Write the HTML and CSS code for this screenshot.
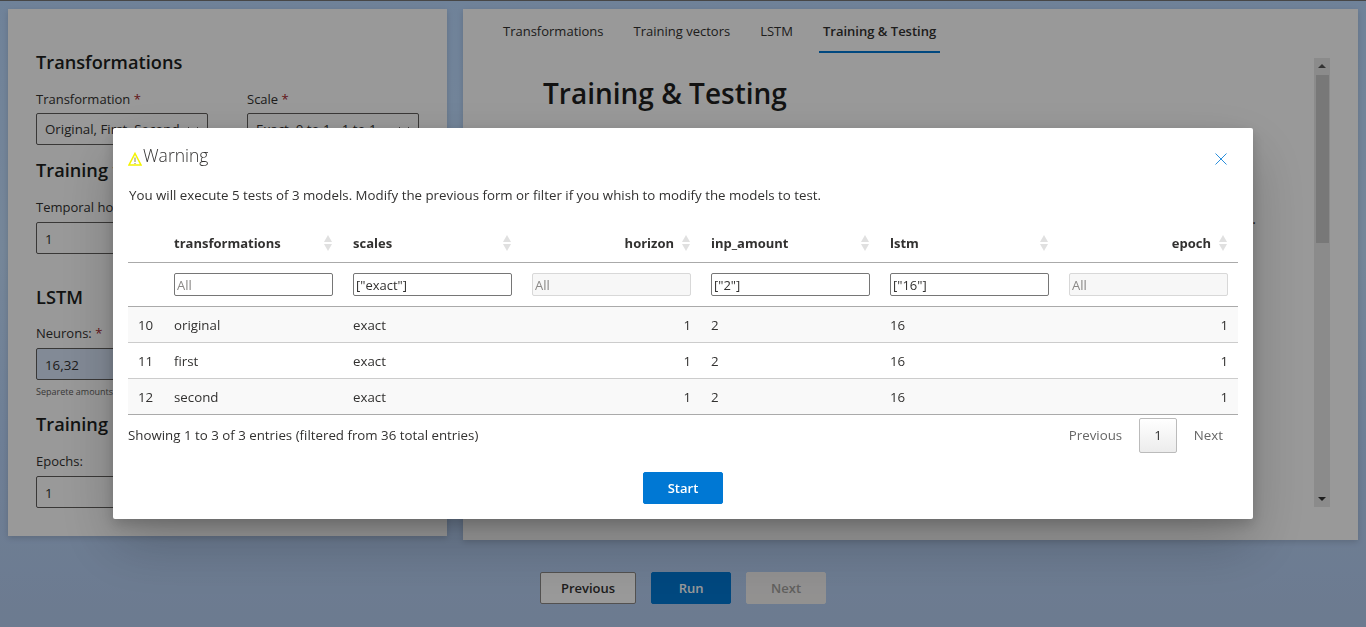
FILE: index.html
```html
<!DOCTYPE html>
<html lang="en">

<head>
    <title>Training &amp; Testing</title>
    <link rel="stylesheet" href="styles.css">
</head>

<body>
    <div class="app">
        <div class="columns">
            <section class="panel form-panel">
                <h2>Transformations</h2>
                <div class="field-row">
                    <div class="field">
                        <label>Transformation <span class="req">*</span></label>
                        <div class="select"><span>Original, First, Second</span><svg width="12" height="12" viewBox="0 0 12 12"><path d="M1 4l5 5 5-5" fill="none" stroke="#605e5c"/></svg></div>
                    </div>
                    <div class="field">
                        <label>Scale <span class="req">*</span></label>
                        <div class="select"><span>Exact, 0 to 1, -1 to 1</span><svg width="12" height="12" viewBox="0 0 12 12"><path d="M1 4l5 5 5-5" fill="none" stroke="#605e5c"/></svg></div>
                    </div>
                </div>
                <h2 class="group-title">Training vectors</h2>
                <label>Temporal horizon:</label>
                <div class="text-input">1</div>
                <h2 class="lstm-title">LSTM</h2>
                <label>Neurons: <span class="req">*</span></label>
                <div class="text-input filled">16,32</div>
                <p class="hint">Separete amounts with commas</p>
                <h2 class="group-title tight">Training</h2>
                <label>Epochs:</label>
                <div class="text-input">1</div>
            </section>

            <section class="panel main-panel">
                <nav class="tabs">
                    <a>Transformations</a>
                    <a>Training vectors</a>
                    <a>LSTM</a>
                    <a class="active">Training &amp; Testing</a>
                </nav>
                <div class="scroll-area">
                    <div class="content">
                        <h1>Training &amp; Testing</h1>
                        <p class="stray">.</p>
                    </div>
                    <div class="scrollbar">
                        <span class="arrow up"></span>
                        <span class="thumb"></span>
                        <span class="arrow down"></span>
                    </div>
                </div>
            </section>
        </div>

        <div class="wizard-buttons">
            <button class="btn">Previous</button>
            <button class="btn primary">Run</button>
            <button class="btn disabled">Next</button>
        </div>
    </div>

    <div class="overlay">
        <div class="modal">
            <div class="modal-head">
                <svg class="warn" width="14" height="14" viewBox="0 0 14 14"><path d="M7 1.5L13 13H1z" fill="none" stroke="#f4f400" stroke-width="1.6"/><path d="M7 5.5v4.5M7 11v1" stroke="#8a8a4a" stroke-width="1"/></svg>
                <span class="modal-title">Warning</span>
                <svg class="close" width="12" height="12" viewBox="0 0 12 12"><path d="M0.5 0.5l11 11M11.5 0.5l-11 11" stroke="#2b8fdc" stroke-width="1" fill="none"/></svg>
            </div>
            <p class="modal-text">You will execute 5 tests of 3 models. Modify the previous form or filter if you whish to modify the models to test.</p>

            <table class="grid">
                <colgroup>
                    <col class="idx-col">
                    <col><col><col><col><col><col>
                </colgroup>
                <thead>
                    <tr class="titles">
                        <th></th>
                        <th><span>transformations</span><i class="sort"></i></th>
                        <th><span>scales</span><i class="sort"></i></th>
                        <th class="num"><span>horizon</span><i class="sort"></i></th>
                        <th><span>inp_amount</span><i class="sort"></i></th>
                        <th><span>lstm</span><i class="sort"></i></th>
                        <th class="num"><span>epoch</span><i class="sort"></i></th>
                    </tr>
                    <tr class="filters">
                        <td></td>
                        <td><input type="text" placeholder="All"></td>
                        <td><input type="text" value="[&quot;exact&quot;]"></td>
                        <td><input type="text" placeholder="All" disabled></td>
                        <td><input type="text" value="[&quot;2&quot;]"></td>
                        <td><input type="text" value="[&quot;16&quot;]"></td>
                        <td><input type="text" placeholder="All" disabled></td>
                    </tr>
                </thead>
                <tbody>
                    <tr>
                        <td class="idx">10</td><td>original</td><td>exact</td><td class="right">1</td><td>2</td><td>16</td><td class="right">1</td>
                    </tr>
                    <tr>
                        <td class="idx">11</td><td>first</td><td>exact</td><td class="right">1</td><td>2</td><td>16</td><td class="right">1</td>
                    </tr>
                    <tr>
                        <td class="idx">12</td><td>second</td><td>exact</td><td class="right">1</td><td>2</td><td>16</td><td class="right">1</td>
                    </tr>
                </tbody>
            </table>

            <div class="table-foot">
                <span>Showing 1 to 3 of 3 entries (filtered from 36 total entries)</span>
                <div class="pager">
                    <a>Previous</a>
                    <a class="current">1</a>
                    <a>Next</a>
                </div>
            </div>

            <div class="modal-actions">
                <button class="btn primary">Start</button>
            </div>
        </div>
    </div>
</body>

</html>
```

FILE: styles.css
```css
/* Page */
body {
    font-family: 'Open Sans', 'Noto Sans', sans-serif;
    font-size: 14px;
    color: #323130;
    margin: 0;
    height: 627px;
    overflow: hidden;
    background: linear-gradient(180deg, #bad9ff 0%, #c4e0ff 40%, #b8d4fa 70%, #b5cdf0 100%);
    border-top: 1px solid #777;
    box-sizing: border-box;
}

.app {
    padding: 8px 8px 0;
}

.columns {
    display: flex;
    align-items: flex-start;
    gap: 16px;
}

.panel {
    background-color: #fff;
    box-shadow: 0 2px 6px rgba(0, 0, 0, 0.15);
    box-sizing: border-box;
}

/* Left form */
.form-panel {
    width: 439px;
    height: 527px;
    padding: 39px 28px 0;
    overflow: hidden;
}

h2 {
    font-size: 18.2px;
    font-weight: 600;
    line-height: 28px;
    margin: 0;
    color: #201f1e;
}

.field-row {
    display: flex;
    gap: 39px;
    margin-top: 13px;
}

.field {
    width: 172px;
}

label {
    display: block;
    font-weight: 400;
    font-size: 13px;
    line-height: 20px;
    margin-bottom: 4px;
}

.req {
    color: #a4262c;
}

.select,
.text-input {
    box-sizing: border-box;
    height: 32px;
    border: 1px solid #605e5c;
    border-radius: 2px;
    padding: 0 8px;
    line-height: 30px;
    font-size: 13.3px;
    white-space: nowrap;
    overflow: hidden;
}

.select {
    display: flex;
    justify-content: space-between;
    align-items: center;
}

.text-input {
    width: 330px;
    margin-top: 5px;
    line-height: 32px;
}

.text-input.filled {
    background-color: #d9e6fa;
}

.group-title {
    margin-top: 11px;
    margin-bottom: 13px;
}

.group-title.tight {
    margin-top: 12px;
    margin-bottom: 13px;
}

.lstm-title {
    margin-top: 29px;
    margin-bottom: 12px;
}

.hint {
    font-size: 9px;
    line-height: 12px;
    margin: 6px 0 0;
    color: #605e5c;
}

/* Right side */
.main-panel {
    width: 895px;
    height: 531px;
    padding-left: 24px;
}

.tabs {
    display: flex;
    gap: 22px;
    padding-left: 12px;
}

.tabs a {
    font-size: 13px;
    line-height: 44px;
    height: 44px;
    padding: 0 4px;
    box-sizing: border-box;
    color: #323130;
}

.tabs a.active {
    font-weight: 600;
    border-bottom: 2px solid #0078d4;
}

.scroll-area {
    display: flex;
    justify-content: space-between;
    padding-top: 5px;
    padding-right: 28px;
}

.content {
    padding-left: 56px;
    width: 713px;
}

h1 {
    font-size: 28px;
    font-weight: 600;
    line-height: 40px;
    margin: 15px 0 0;
    color: #201f1e;
}

.stray {
    margin: 96px 0 0;
    text-align: right;
    line-height: 20px;
}

.scrollbar {
    width: 16px;
    height: 449px;
    background-color: #e8e8e8;
    display: flex;
    flex-direction: column;
    align-items: center;
}

.arrow {
    flex: none;
    width: 0;
    height: 0;
    border-left: 4px solid transparent;
    border-right: 4px solid transparent;
}

.arrow.up {
    border-bottom: 4px solid #555;
    margin: 6px 0 7px;
}

.arrow.down {
    border-top: 4px solid #333;
    margin: auto 0 6px;
}

.thumb {
    width: 13px;
    height: 168px;
    background-color: #c8c8c8;
}

/* Previous / Run / Next */
.wizard-buttons {
    display: flex;
    justify-content: center;
    gap: 15px;
    margin-top: 32px;
}

.btn {
    font-family: inherit;
    font-size: 13px;
    font-weight: 600;
    height: 32px;
    min-width: 80px;
    padding: 0 20px;
    background-color: #fff;
    color: #323130;
    border: 1px solid #8a8886;
    border-radius: 2px;
}

.btn.primary {
    background-color: #0078d4;
    border-color: #0078d4;
    color: #fff;
}

.btn.disabled {
    background-color: #f3f2f1;
    border-color: #f3f2f1;
    color: #a19f9d;
}

/* Dialog */
.overlay {
    position: fixed;
    top: 0;
    left: 0;
    right: 0;
    bottom: 0;
    background-color: rgba(0, 0, 0, 0.4);
    display: flex;
    justify-content: center;
    align-items: flex-start;
    padding-top: 128px;
    box-sizing: border-box;
}

.modal {
    width: 1140px;
    height: 391px;
    box-sizing: border-box;
    background-color: #fff;
    padding: 0 15px;
    border-radius: 2px;
    box-shadow: 0 25px 58px rgba(0, 0, 0, 0.22), 0 5px 14px rgba(0, 0, 0, 0.18);
}

.modal-head {
    display: flex;
    align-items: center;
    height: 56px;
}

.warn {
    margin: 6px 1px 0 0;
}

.modal-title {
    font-size: 17.5px;
    font-weight: 300;
    line-height: 55px;
    height: 56px;
}

.close {
    margin-left: auto;
    margin-right: 11px;
    margin-top: 6px;
}

.modal-text {
    margin: 0 0 0 1px;
    font-size: 13.3px;
    line-height: 22px;
}

/* Table */
.grid {
    width: 1110px;
    table-layout: fixed;
    border-collapse: collapse;
    margin-top: 19px;
    font-size: 13.3px;
}

.idx-col {
    width: 36px;
}

.grid th {
    height: 37px;
    box-sizing: border-box;
    padding: 0 10px;
    text-align: left;
    font-weight: 700;
    font-size: 13px;
    color: #323130;
    position: relative;
    border-bottom: 1px solid #aaa;
}

.grid th.num {
    text-align: right;
    padding-right: 27px;
}

.sort {
    position: absolute;
    right: 11px;
    top: 10px;
    width: 8px;
    height: 16px;
}

.sort::before,
.sort::after {
    content: "";
    position: absolute;
    left: 0;
    border-left: 4px solid transparent;
    border-right: 4px solid transparent;
}

.sort::before {
    top: 0;
    border-bottom: 7px solid #e0e0e0;
}

.sort::after {
    bottom: 0;
    border-top: 7px solid #e0e0e0;
}

.filters td {
    height: 44px;
    padding: 0 10px;
    border-bottom: 1px solid #aaa;
    box-sizing: border-box;
}

.filters input {
    display: block;
    width: 100%;
    height: 23px;
    box-sizing: border-box;
    font-family: inherit;
    font-size: 13px;
    color: #323130;
    padding: 2px 2px 0;
    border: 1px solid #767676;
    border-radius: 2px;
}

.filters input::placeholder {
    color: #8a8886;
}

.filters input:disabled {
    background-color: #f7f7f7;
    border-color: #d8d8d8;
}

.grid tbody td {
    height: 36px;
    box-sizing: border-box;
    padding: 2px 10px 0;
    border-bottom: 1px solid #ccc;
    color: #323130;
}

.grid tbody tr:nth-child(odd) td {
    background-color: #f9f9f9;
}

.grid tbody tr:last-child td {
    border-bottom-color: #aaa;
}

.grid td.right {
    text-align: right;
}

.table-foot {
    display: flex;
    justify-content: space-between;
    align-items: center;
    font-size: 13.3px;
    padding-top: 3px;
}

.pager {
    display: flex;
    align-items: center;
    padding-right: 14px;
    color: #666;
}

.pager a {
    padding: 0 16px;
    line-height: 33px;
    border: 1px solid transparent;
    border-radius: 2px;
}

.pager a:last-child {
    padding-left: 16px;
    padding-right: 0;
}

.pager .current {
    color: #333;
    padding: 0 14px;
    border-color: #bbb;
    background: linear-gradient(180deg, #fff 0%, #ececec 100%);
}

.modal-actions {
    display: flex;
    justify-content: center;
    margin-top: 19px;
}
```
